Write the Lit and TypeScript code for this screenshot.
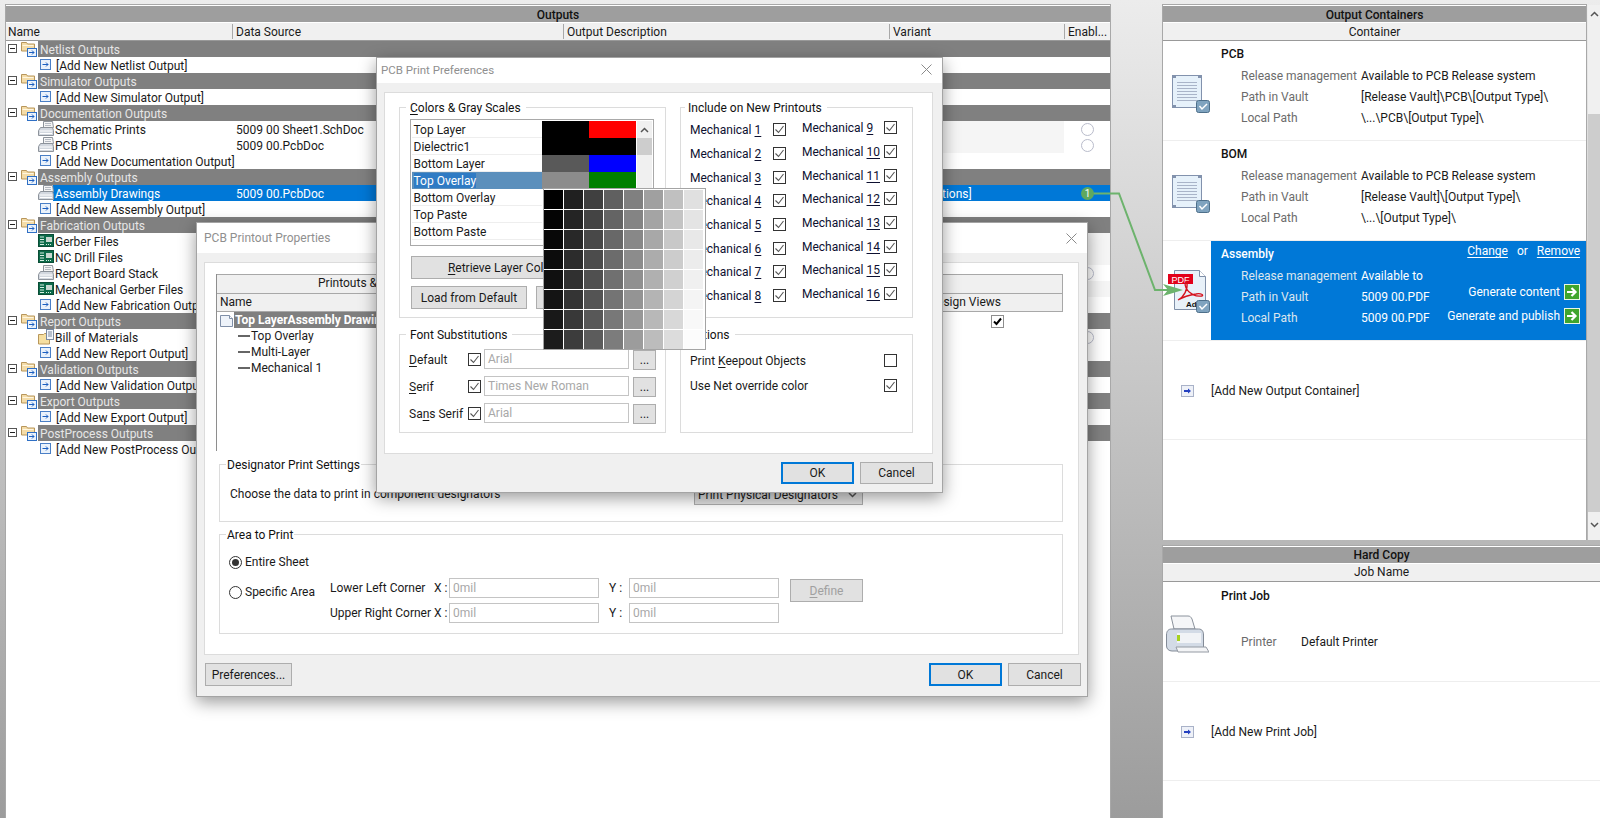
import { LitElement, html, svg, css, nothing } from 'lit';
import { customElement } from 'lit/decorators.js';

// small icon helpers
const minusBox = html`<svg class="ex" width="9" height="9"><rect x=".5" y=".5" width="8" height="8" fill="#fff" stroke="#555"/><path d="M2 4.5h5" stroke="#222"/></svg>`;
const folderIcon = html`<svg class="ic" width="16" height="16"><path d="M.5 10V1.500h5l1 1.500h7v7z" fill="#f4dca8" stroke="#b8965a"/><path d="M1.500 4.500h11" stroke="#fff6df"/><rect x="6.500" y="7.500" width="9" height="8" fill="#eaf2fb" stroke="#2f6fc4"/><path d="M8 11.500h5M11 9.500l2 2-2 2" fill="none" stroke="#1c5fc0"/></svg>`;
const addIcon = html`<svg class="ic" width="11" height="11"><rect x=".5" y=".5" width="10" height="10" fill="#eaf2fb" stroke="#4a7fc6"/><path d="M2.500 5.500h5.500M6 3.500l2 2-2 2" fill="none" stroke="#1c5fc0"/></svg>`;
const printIcon = html`<svg class="ic" width="16" height="16"><path d="M5.500 .5h9l1 6h-10z" fill="#f4f4f4" stroke="#8d939b"/><path d="M7 2.500h6M7 4.500h6" stroke="#b5bac2"/><path d="M2.500 6.500h12l1 3v5H.5v-5z" fill="#d3d8df" stroke="#8d939b"/><path d="M2 10h12M2 12.500h12" stroke="#fff"/></svg>`;
const gerberIcon = html`<svg class="ic" width="16" height="16"><rect x=".5" y="1.500" width="15" height="12" fill="#0d6b4a" stroke="#0a4d36"/><path d="M2 4h4M2 6.500h4M2 9h4M2 11.500h4" stroke="#d8f0e4"/><rect x="8" y="4" width="6" height="5" fill="#c8d8d0"/><path d="M8 11.500h6" stroke="#d8f0e4" stroke-dasharray="1 1"/></svg>`;
const bomIcon = html`<svg class="ic" width="16" height="16"><path d="M.5 15V5.500h5l1-1h5V15z" fill="#f6dfa0" stroke="#b8965a"/><rect x="8.500" y=".5" width="7" height="10" fill="#f3f6fa" stroke="#7a8aa0"/><path d="M10 3h4M10 5h4M10 7h4" stroke="#7a8aa0"/></svg>`;
const badge = (y: number) => svg`<rect x="33.500" y="${y + 0.5}" width="13" height="12" rx="2" fill="#7fa3bf" stroke="#4d6f8a"/><path d="M36.500 ${y + 6}l2.500 3 5-5" fill="none" stroke="#fff" stroke-width="1.500"/>`;
const docIcon = html`<svg class="bigic" width="48" height="50"><rect x="9.500" y="6.500" width="29" height="32" fill="#e6f1fa" stroke="#8292ad"/>${[13, 16, 19, 22, 25, 28, 31].map((y) => svg`<path d="M14 ${y + 0.5}h20" stroke="#a9b4c8"/>`)}<path d="M10 7h3v2h-3zM35 7h3v2h-3zM10 36h3v2h-3z" fill="#8292ad"/>${badge(31)}</svg>`;
const pdfIcon = html`<svg class="bigic" width="48" height="50"><path d="M11.500 1.500h25l6 6v33h-31z" fill="#e8f1f9" stroke="#7f8fa8"/><path d="M36.500 1.500v6h6" fill="#fff" stroke="#7f8fa8"/><rect x="5" y="5" width="25" height="10" fill="#e2001a"/><text x="17.500" y="13.500" font-size="9" fill="#fff" text-anchor="middle" font-family="Liberation Sans, sans-serif">PDF</text><path d="M15 31c6-3 10-11 9-17-1-3-3 0-1 5 3 6 10 9 16 8 2-1-1-3-6-2-7 1-13 3-18 6z" fill="none" stroke="#d5121e" stroke-width="1.300"/><text x="23" y="38" font-size="8" font-weight="700" fill="#111" font-family="Liberation Sans, sans-serif">Ado</text>${badge(31)}</svg>`;
const greenGo = html`<svg class="go" width="16" height="16"><rect x=".5" y=".5" width="15" height="15" fill="#3fa52c" stroke="#e8f5e4"/><path d="M3 8h8M7.500 4l4 4-4 4" fill="none" stroke="#fff" stroke-width="2.200"/></svg>`;
const addBlue = html`<svg class="ic" width="13" height="12"><rect x=".5" y=".5" width="12" height="11" fill="#eef1f8" stroke="#a9b2c8"/><path d="M3 6h6" stroke="#2440c0" stroke-width="2"/><path d="M7 3.500l3 2.500-3 2.500z" fill="#2440c0"/></svg>`;
const bigPrinter = html`<svg width="44" height="40"><path d="M6 1h17c2 0 3 1 4 3l3 10H9z" fill="#f5f6f8" stroke="#8b929c"/><path d="M1.500 20c0-4 2-6 5-6h27c4 0 5 3 5 6v13c0 2-1 3-3 3H7c-3 0-5.500-2-5.500-5z" fill="#d3dbe6" stroke="#838b97"/><path d="M12 18h24v10H12z" fill="#f1f3f6"/><rect x="12" y="20" width="3" height="6" fill="#a6d21e"/><path d="M11 32h30l3 5H13z" fill="#f3f4f6" stroke="#949aa3"/></svg>`;
const chevUp = html`<svg width="9" height="6"><path d="M1 5l3.500-3.500L8 5" fill="none" stroke="#555" stroke-width="1.500"/></svg>`;
const chevDown = html`<svg width="9" height="6"><path d="M1 1l3.500 3.500L8 1" fill="none" stroke="#555" stroke-width="1.500"/></svg>`;
const cb = (on = true) => html`<svg class="cb" width="13" height="13"><rect x=".5" y=".5" width="12" height="12" fill="#fff" stroke="#333"/>${on ? svg`<path d="M2.500 6.500l3 3 5-6.500" fill="none" stroke="#555" stroke-width="1.100"/>` : nothing}</svg>`;
const closeX = html`<svg width="11" height="11"><path d="M.5.5l10 10M10.500.5l-10 10" stroke="#8a8a8a"/></svg>`;

type Row =
  | { k: 'group'; name: string }
  | { k: 'add'; name: string }
  | { k: 'item'; name: string; icon: unknown; src?: string; radio?: boolean; patch?: 'mid' | 'all'; sel?: boolean };

const rows: Row[] = [
  { k: 'group', name: 'Netlist Outputs' },
  { k: 'add', name: '[Add New Netlist Output]' },
  { k: 'group', name: 'Simulator Outputs' },
  { k: 'add', name: '[Add New Simulator Output]' },
  { k: 'group', name: 'Documentation Outputs' },
  { k: 'item', name: 'Schematic Prints', icon: printIcon, src: '5009 00 Sheet1.SchDoc', radio: true, patch: 'mid' },
  { k: 'item', name: 'PCB Prints', icon: printIcon, src: '5009 00.PcbDoc', radio: true, patch: 'mid' },
  { k: 'add', name: '[Add New Documentation Output]' },
  { k: 'group', name: 'Assembly Outputs' },
  { k: 'item', name: 'Assembly Drawings', icon: printIcon, src: '5009 00.PcbDoc', sel: true },
  { k: 'add', name: '[Add New Assembly Output]' },
  { k: 'group', name: 'Fabrication Outputs' },
  { k: 'item', name: 'Gerber Files', icon: gerberIcon, patch: 'all' },
  { k: 'item', name: 'NC Drill Files', icon: gerberIcon, patch: 'all' },
  { k: 'item', name: 'Report Board Stack', icon: printIcon, radio: true },
  { k: 'item', name: 'Mechanical Gerber Files', icon: gerberIcon, patch: 'all' },
  { k: 'add', name: '[Add New Fabrication Output]' },
  { k: 'group', name: 'Report Outputs' },
  { k: 'item', name: 'Bill of Materials', icon: bomIcon, radio: true },
  { k: 'add', name: '[Add New Report Output]' },
  { k: 'group', name: 'Validation Outputs' },
  { k: 'add', name: '[Add New Validation Output]' },
  { k: 'group', name: 'Export Outputs' },
  { k: 'add', name: '[Add New Export Output]' },
  { k: 'group', name: 'PostProcess Outputs' },
  { k: 'add', name: '[Add New PostProcess Output]' },
];

const containers = [
  { title: 'PCB', vault: '[Release Vault]\\PCB\\[Output Type]\\', local: '\\...\\PCB\\[Output Type]\\' },
  { title: 'BOM', vault: '[Release Vault]\\[Output Type]\\', local: '\\...\\[Output Type]\\' },
];

const layers = [
  { name: 'Top Layer', a: '#000', b: '#f00' },
  { name: 'Dielectric1', a: '#000', b: '#000' },
  { name: 'Bottom Layer', a: '#595959', b: '#00f' },
  { name: 'Top Overlay', a: '#8c8c8c', b: '#008000', sel: true },
  { name: 'Bottom Overlay', a: '#fff', b: '#fff' },
  { name: 'Top Paste', a: '#fff', b: '#fff' },
  { name: 'Bottom Paste', a: '#fff', b: '#fff' },
];

@customElement('app-root')
export class AppRoot extends LitElement {
  static styles = css`
    :host {
      display: block;
      position: relative;
      width: 1600px;
      height: 818px;
      overflow: hidden;
      background: linear-gradient(#ececec, #9c9c9c);
      font: 12px/16px Roboto, sans-serif;
      color: #1a1a1a;
    }
    svg { display: block; flex: none; }
    u { text-underline-offset: 2px; }

    .desk { display: flex; height: 814px; padding: 4px 0 0 5px; gap: 51px; }
    .panel { background: #fff; border: 1px solid #a8a8a8; border-width: 1px 1px 0 1px; padding-top: 1px; display: flex; flex-direction: column; }
    .outputs { width: 1106px; box-sizing: border-box; }
    .title { height: 16px; margin-bottom: 1px; background: #9e9e9e; text-align: center; font-weight: 500; color: #111; flex: none; }
    .head { height: 17px; border-bottom: 1px solid #999; background: #f0f0f0; text-align: center; flex: none; }
    .outputs .title, .top .title, .top .head { line-height: 18px; }
    .cols { display: grid; grid-template-columns: 226px 331px 326px 175px 1fr; grid-template-rows: 16px; }
    .head.cols { text-align: left; line-height: 16px; }
    .head.cols span { padding-left: 3px; border-left: 1px solid #a8a8a8; height: 15px; margin-top: 1px; white-space: nowrap; overflow: hidden; }
    .head.cols span:first-child { border-left: 0; padding-left: 2px; }

    .row { height: 16px; white-space: nowrap; line-height: 18px; }
    .group { display: flex; align-items: flex-start; padding-left: 2px; }
    .group .ex { margin: 3px 4px 0 0; }
    .gbar { flex: 1; height: 16px; margin-left: 1px; padding-left: 2px; background: #808080; color: #e6e6e6; }
    .add { display: flex; align-items: flex-start; gap: 5px; padding-left: 34px; }
    .add .ic { margin-top: 2px; }
    .item .nm { display: flex; align-items: flex-start; padding-left: 32px; gap: 1px; overflow: visible; }
    .item.sel { color: #fff; background: linear-gradient(90deg, transparent 47px, #0078d7 47px); }
    .item .src { padding-left: 4px; }
    .item .var { padding-left: 4px; }
    .mid .var, .all .var, .all .en { background: #f5f5f5; }
    .en { display: flex; justify-content: center; align-items: center; }
    .radio { width: 11px; height: 11px; border: 1px solid #b9bccb; border-radius: 50%; background: #fff; }

    .side { width: 438px; display: flex; flex-direction: column; gap: 5px; }
    .top { flex: none; height: 536px; display: flex; gap: 1px; background: transparent; }
    .top .panel { flex: 1; }
    .sbar { width: 12px; background: #f0f0f0; margin-top: 1px; display: flex; flex-direction: column; align-items: center; }
    .sbar .up { margin-top: 6px; }
    .sbar .thumb { width: 100%; height: 398px; margin-top: 97px; background: #cdcdcd; }
    .sbar .dn { margin-top: 10px; }
    .hard { flex: 1; border-right: 0; }

    .block { height: 99px; flex: none; display: flex; border-bottom: 1px solid #eee; }
    .slot { width: 48px; flex: none; padding-top: 28px; box-sizing: border-box; }
    .body { flex: 1; padding: 5px 6px 0 10px; display: flex; justify-content: space-between; }
    .block.sel .body { background: #0078d7; color: #fff; }
    .name { font-weight: 500; margin-bottom: 3px; color: #111; }
    .sel .name { color: #fff; }
    .kv { display: flex; height: 21px; align-items: center; padding-left: 20px; white-space: nowrap; }
    .kv b { font-weight: 400; width: 120px; color: #6b6b6b; }
    .sel .kv b { color: #dde6ee; }
    .acts { display: flex; flex-direction: column; align-items: flex-end; margin-top: -3px; white-space: nowrap; }
    .links { display: flex; gap: 9px; height: 16px; margin-bottom: 25px; }
    .gen { display: flex; gap: 4px; align-items: center; margin-bottom: 8px; }
    .addrow { height: 99px; flex: none; display: flex; align-items: center; border-bottom: 1px solid #eee; padding: 2px 0 0 18px; box-sizing: border-box; gap: 17px; }
    .job { height: 99px; flex: none; border-bottom: 1px solid #eee; display: flex; }
    .job .slot { padding: 33px 0 0 2px; }
    .job .body { display: block; padding-top: 6px; }
    .job .kv { margin-top: 27px; }
    .job .kv b { width: 60px; }

    .dialog { position: absolute; box-sizing: border-box; background: #f0f0f0; border: 1px solid #a4a4a4; box-shadow: 0 5px 16px rgba(0, 0, 0, .4); display: flex; flex-direction: column; }
    .prefs { left: 376px; top: 57px; width: 567px; height: 436px; padding: 0 9px 0 7px; }
    .props { left: 196px; top: 222px; width: 892px; height: 475px; padding: 0 7px; }
    .dbar { background: #fff; margin: 0 -9px 0 -7px; height: 25px; box-sizing: border-box; padding: 0 10px 2px 4px; display: flex; justify-content: space-between; align-items: center; color: #8f8f8f; font-size: 11.5px; }
    .props .dbar { margin: 0 -7px; height: 30px; font-size: 12px; padding: 0 10px 0 7px; }
    .sheet { background: #fff; border: 1px solid #dcdcdc; margin-top: 9px; box-sizing: border-box; }
    .prefs .sheet { height: 362px; padding: 14px 19px 0 14px; display: grid; grid-template-columns: 267px 233px; grid-template-rows: 211px 99px; column-gap: 14px; row-gap: 16px; }
    .props .sheet { height: 393px; margin-right: 1px; padding: 11px 15px 0 11px; }
    .fs { position: relative; border: 1px solid #dcdcdc; box-sizing: border-box; }
    .lg { position: absolute; left: 6px; top: -8px; background: #fff; padding: 0 5px 0 4px; white-space: nowrap; color: #111; }
    .lg.near { left: 4px; padding-left: 3px; }
    .lg.tight { left: 6px; padding: 0 1px; }

    .colors { padding: 11px 0 0 10px; }
    .list { width: 244px; height: 127px; box-sizing: border-box; border: 1px solid #a9a9a9; padding: 1px 1px 0; display: flex; }
    .lrows { width: 224px; }
    .lrow { display: flex; height: 17px; }
    .lrow .t { width: 130px; box-sizing: border-box; padding-left: 1.5px; border-bottom: 1px solid #eee; line-height: 18px; }
    .lrow.on .t { background: #5b8fbc; border: 0; }
    .lrow.on .t span { background: #2f7bc4; color: #fff; display: inline-block; height: 15px; line-height: 17px; vertical-align: top; margin-top: 1px; }
    .lrow i { width: 47px; }
    .lsb { width: 16px; margin-left: 1px; background: #f0f0f0; display: flex; flex-direction: column; align-items: center; }
    .lsb .u { height: 17px; display: flex; align-items: center; }
    .lsb .th { height: 17px; width: 100%; background: #cdcdcd; }
    .btn { box-sizing: border-box; display: flex; align-items: center; justify-content: center; background: #e1e1e1; border: 1px solid #adadad; white-space: nowrap; }
    .retrieve { width: 243px; height: 23px; margin: 10px 0 7px 1px; }
    .btnrow { display: flex; gap: 9px; margin-left: 1px; }
    .btnrow .btn { height: 23px; }

    .mech { display: flex; gap: 16px; padding: 10px 0 0 9px; }
    .mcol { width: 96px; }
    .mcol.two { margin-top: -2px; width: 95px; }
    .mrow { display: flex; justify-content: space-between; align-items: center; height: 23.7px; white-space: nowrap; color: #0d1030; }
    .mrow span { padding-top: 1px; }

    .fonts { padding: 14px 0 0 9px; display: grid; row-gap: 7px; grid-auto-rows: 20px; }
    .frow { display: flex; align-items: center; }
    .frow .l { width: 59px; padding-top: 2px; }
    .field { box-sizing: border-box; background: #fff; border: 1px solid #c4c4c4; color: #a8a8a8; padding-left: 3px; height: 20px; line-height: 19px; }
    .frow .field { width: 145px; margin-left: 3px; }
    .frow .btn { width: 23px; height: 20px; margin: 1px 0 0 4px; padding-bottom: 0; }
    .opts { padding: 13px 15px 0 9px; }
    .orow { display: flex; justify-content: space-between; align-items: center; height: 25px; }

    .foot { display: flex; justify-content: flex-end; gap: 6px; margin-top: 8px; }
    .foot .btn { width: 73px; height: 22px; }
    .foot .btn.def { border: 2px solid #0078d7; }
    .props .foot { margin-top: 8px; justify-content: flex-start; margin-right: -1px; }
    .props .foot .btn { height: 23px; }
    .props .foot .pref { width: 87px; margin-left: 1px; margin-right: auto; }

    .ptable { height: 177px; border-left: 1px solid #8e8e8e; box-sizing: border-box; }
    .phead { height: 18px; background: #f0f0f0; border: 1px solid #a8a8a8; border-left: 0; padding-left: 101px; }
    .phead2 { height: 17px; background: #f0f0f0; border: 1px solid #a8a8a8; border-width: 0 1px 1px 0; display: flex; justify-content: space-between; padding: 0 61px 0 3px; }
    .tree { height: 16px; display: flex; white-space: nowrap; align-items: center; }
    .tree.root { padding-left: 3px; justify-content: space-between; padding-right: 59px; }
    .tree .doc { display: flex; align-items: center; }
    .tree .bar { background: #7f7f7f; color: #fff; font-weight: 700; padding-left: 1px; width: 260px; margin-left: 1px; height: 16px; }
    .tree.leaf { padding-left: 21px; gap: 1px; }
    .tree.leaf i { width: 12px; height: 2px; background: #666; }
    .pcheck { width: 11px; height: 11px; border: 1px solid #8e8e8e; background: #fff; display: flex; align-items: center; justify-content: center; margin-top: 2px; }
    .design { height: 58px; margin: 13px 0 12px 3px; padding: 21px 0 0 10px; }
    .dd { position: absolute; left: 474px; top: 19px; width: 169px; height: 21px; box-sizing: border-box; background: #e1e1e1; border: 1px solid #adadad; padding-left: 3px; display: flex; align-items: center; justify-content: space-between; padding-right: 5px; white-space: nowrap; }
    .area { height: 100px; margin-left: 3px; padding: 17px 0 0 9px; }
    .rline { display: flex; align-items: center; gap: 3px; height: 20px; }
    .rb { width: 11px; height: 11px; border: 1px solid #333; border-radius: 50%; background: #fff; display: flex; align-items: center; justify-content: center; }
    .rb.on::after { content: ''; width: 7px; height: 7px; background: #333; border-radius: 50%; }
    .specific { display: flex; margin-top: 6px; }
    .specific .rline { width: 101px; margin-top: 4px; align-self: flex-start; }
    .grid { display: grid; grid-template-columns: 104px 15px 150px 30px 150px 84px; row-gap: 5px; grid-auto-rows: 20px; align-items: center; white-space: nowrap; }
    .grid .y { padding-left: 10px; box-sizing: border-box; }
    .grid .define { grid-column: 6; grid-row: 1 / span 2; height: 23px; margin-left: 11px; width: 73px; align-self: start; margin-top: 1px; color: #a0a0a0; }

    .popup { position: absolute; left: 543px; top: 188px; box-sizing: border-box; width: 163px; height: 162px; background: #fff; border: 1px solid #a4a4a4; padding: 1px 0 0 0; display: grid; grid-template-columns: repeat(8, 19px); grid-auto-rows: 19px; gap: 1px; }
    .wire { position: absolute; left: 0; top: 0; pointer-events: none; }
    .pin { position: absolute; left: 1081px; top: 187px; width: 13px; height: 13px; border-radius: 50%; background: #5fa85f; color: #fff; font-size: 10px; line-height: 13px; text-align: center; }
  `;

  private renderRow(r: Row) {
    if (r.k === 'group') {
      return html`<div class="row group">${minusBox}${folderIcon}<div class="gbar">${r.name}</div></div>`;
    }
    if (r.k === 'add') {
      return html`<div class="row add">${addIcon}<span>${r.name}</span></div>`;
    }
    return html`<div class="row item cols ${r.sel ? 'sel' : ''} ${r.patch ?? ''}">
      <div class="nm">${r.icon}<span>${r.name}</span></div>
      <div class="src">${r.src ?? ''}</div>
      <div></div>
      <div class="var">${r.sel ? '[No Variations]' : ''}</div>
      <div class="en">${r.radio ? html`<div class="radio"></div>` : nothing}</div>
    </div>`;
  }

  private renderPrefs() {
    const mech = (n: number) => html`<div class="mrow"><span>Mechanical <u>${n}</u></span>${cb()}</div>`;
    return html`<div class="dialog prefs">
      <div class="dbar"><span>PCB Print Preferences</span>${closeX}</div>
      <div class="sheet">
        <div class="fs colors">
          <div class="lg"><u>C</u>olors &amp; Gray Scales</div>
          <div class="list">
            <div class="lrows">
              ${layers.map((l) => html`<div class="lrow ${l.sel ? 'on' : ''}">
                <div class="t"><span>${l.name}</span></div>
                <i style="background:${l.a}"></i><i style="background:${l.b}"></i>
              </div>`)}
            </div>
            <div class="lsb"><div class="u">${chevUp}</div><div class="th"></div></div>
          </div>
          <div class="btn retrieve"><span><u>R</u>etrieve Layer Colors From PCB</span></div>
          <div class="btnrow">
            <div class="btn" style="width:116px">Load from Default</div>
            <div class="btn" style="width:118px">Load</div>
          </div>
        </div>
        <div class="fs">
          <div class="lg near">Include on New Printouts</div>
          <div class="mech">
            <div class="mcol">${[1, 2, 3, 4, 5, 6, 7, 8].map(mech)}</div>
            <div class="mcol two">${[9, 10, 11, 12, 13, 14, 15, 16].map(mech)}</div>
          </div>
        </div>
        <div class="fs fonts">
          <div class="lg">Font Substitutions</div>
          <div class="frow"><span class="l"><u>D</u>efault</span>${cb()}<div class="field">Arial</div><div class="btn">...</div></div>
          <div class="frow"><span class="l"><u>S</u>erif</span>${cb()}<div class="field">Times New Roman</div><div class="btn">...</div></div>
          <div class="frow"><span class="l">Sa<u>n</u>s Serif</span>${cb()}<div class="field">Arial</div><div class="btn">...</div></div>
        </div>
        <div class="fs opts">
          <div class="lg near">Options</div>
          <div class="orow"><span>Print <u>K</u>eepout Objects</span>${cb(false)}</div>
          <div class="orow"><span>Use Net override color</span>${cb()}</div>
        </div>
      </div>
      <div class="foot"><div class="btn def">OK</div><div class="btn">Cancel</div></div>
    </div>`;
  }

  private renderProps() {
    return html`<div class="dialog props">
      <div class="dbar"><span>PCB Printout Properties</span>${closeX}</div>
      <div class="sheet">
        <div class="ptable">
          <div class="phead">Printouts &amp; Layers</div>
          <div class="phead2"><span>Name</span><span>Design Views</span></div>
          <div class="tree root">
            <div class="doc">
              <svg width="13" height="13"><path d="M.5 1.500h9l3 3v8H.5z" fill="#eef3fa" stroke="#7f8fa8"/><path d="M9.500 1.500v3h3" fill="#fff" stroke="#7f8fa8"/></svg>
              <div class="bar">Top LayerAssembly Drawings</div>
            </div>
            <div class="pcheck"><svg width="9" height="9"><path d="M1 4.500l2.500 2.500L8 1.500" fill="none" stroke="#000" stroke-width="2"/></svg></div>
          </div>
          ${['Top Overlay', 'Multi-Layer', 'Mechanical 1'].map((n) => html`<div class="tree leaf"><i></i><span>${n}</span></div>`)}
        </div>
        <div class="fs design">
          <div class="lg tight">Designator Print Settings</div>
          <div>Choose the data to print in component designators</div>
          <div class="dd"><span>Print Physical Designators</span>${chevDown}</div>
        </div>
        <div class="fs area">
          <div class="lg tight">Area to Print</div>
          <div class="rline"><div class="rb on"></div><span>Entire Sheet</span></div>
          <div class="specific">
            <div class="rline"><div class="rb"></div><span>Specific Area</span></div>
            <div class="grid">
              <span>Lower Left Corner</span><span>X :</span><div class="field">0mil</div><span class="y">Y :</span><div class="field">0mil</div>
              <div class="btn define"><span><u>D</u>efine</span></div>
              <span>Upper Right Corner</span><span>X :</span><div class="field">0mil</div><span class="y">Y :</span><div class="field">0mil</div>
            </div>
          </div>
        </div>
      </div>
      <div class="foot"><div class="btn pref">Preferences...</div><div class="btn def">OK</div><div class="btn">Cancel</div></div>
    </div>`;
  }

  render() {
    const cells = [];
    for (let r = 0; r < 8; r++) {
      for (let c = 0; c < 8; c++) {
        const g = Math.min(255, c * 32 + r * 4);
        cells.push(html`<div style="background:rgb(${g},${g},${g})"></div>`);
      }
    }
    return html`
      <div class="desk">
        <div class="panel outputs">
          <div class="title">Outputs</div>
          <div class="head cols"><span>Name</span><span>Data Source</span><span>Output Description</span><span>Variant</span><span>Enabl...</span></div>
          ${rows.map((r) => this.renderRow(r))}
        </div>
        <div class="side">
          <div class="top">
            <div class="panel">
              <div class="title">Output Containers</div>
              <div class="head">Container</div>
              ${containers.map((c) => html`<div class="block">
                <div class="slot">${docIcon}</div>
                <div class="body"><div>
                  <div class="name">${c.title}</div>
                  <div class="kv"><b>Release management</b>Available to PCB Release system</div>
                  <div class="kv"><b>Path in Vault</b>${c.vault}</div>
                  <div class="kv"><b>Local Path</b>${c.local}</div>
                </div></div>
              </div>`)}
              <div class="block sel">
                <div class="slot">${pdfIcon}</div>
                <div class="body">
                  <div>
                    <div class="name">Assembly</div>
                    <div class="kv"><b>Release management</b>Available to</div>
                    <div class="kv"><b>Path in Vault</b>5009 00.PDF</div>
                    <div class="kv"><b>Local Path</b>5009 00.PDF</div>
                  </div>
                  <div class="acts">
                    <div class="links"><u>Change</u><span>or</span><u>Remove</u></div>
                    <div class="gen">Generate content ${greenGo}</div>
                    <div class="gen">Generate and publish ${greenGo}</div>
                  </div>
                </div>
              </div>
              <div class="addrow">${addBlue}<span>[Add New Output Container]</span></div>
            </div>
            <div class="sbar">
              <div class="up">${chevUp}</div>
              <div class="thumb"></div>
              <div class="dn">${chevDown}</div>
            </div>
          </div>
          <div class="panel hard">
            <div class="title">Hard Copy</div>
            <div class="head">Job Name</div>
            <div class="job">
              <div class="slot">${bigPrinter}</div>
              <div class="body">
                <div class="name">Print Job</div>
                <div class="kv"><b>Printer</b>Default Printer</div>
              </div>
            </div>
            <div class="addrow">${addBlue}<span>[Add New Print Job]</span></div>
          </div>
        </div>
      </div>
      ${this.renderProps()}
      ${this.renderPrefs()}
      <div class="popup">${cells}</div>
      <svg class="wire" width="1600" height="818">
        <path d="M1087 193.500H1119L1155 290H1170" fill="none" stroke="#6db36d" stroke-width="2"/>
        <path d="M1163 284l20 6-20 6 5-6z" fill="#6db36d"/>
      </svg>
      <div class="pin">1</div>
    `;
  }
}
